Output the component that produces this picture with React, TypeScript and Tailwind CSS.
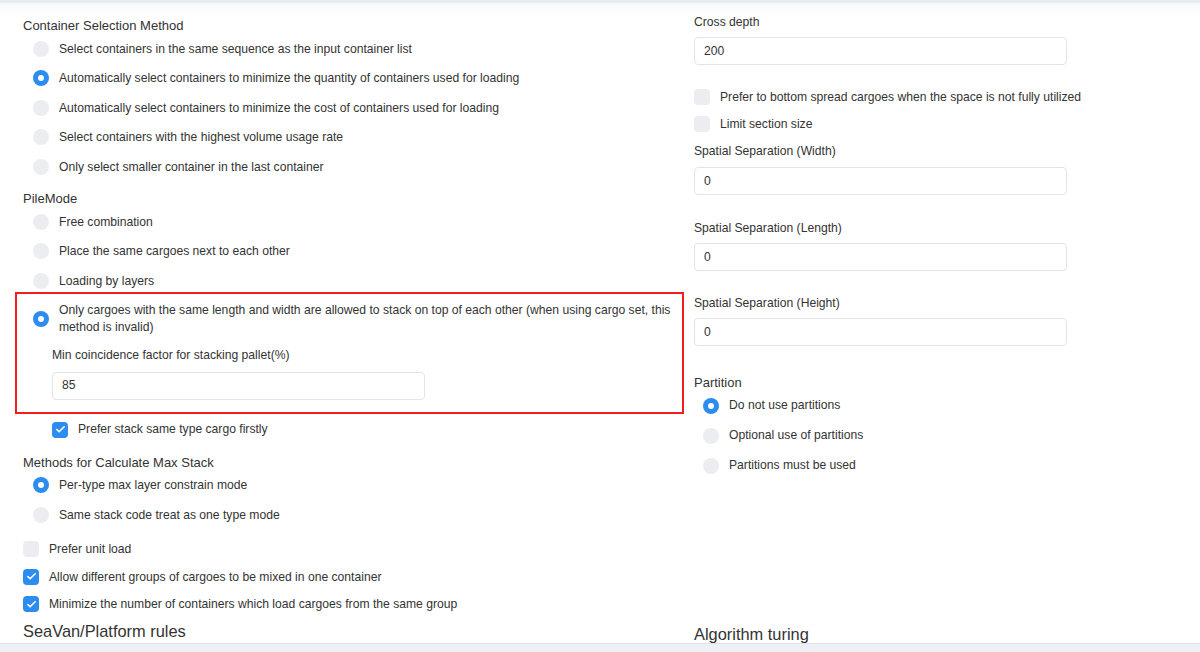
import { Check } from 'lucide-react';

const containerOptions = [
    'Select containers in the same sequence as the input container list',
    'Automatically select containers to minimize the quantity of containers used for loading',
    'Automatically select containers to minimize the cost of containers used for loading',
    'Select containers with the highest volume usage rate',
    'Only select smaller container in the last container',
];

const pileOptions = [
    'Free combination',
    'Place the same cargoes next to each other',
    'Loading by layers',
];

const partitionOptions = [
    'Do not use partitions',
    'Optional use of partitions',
    'Partitions must be used',
];

function Radio({ checked }: { checked?: boolean }) {
    if (checked) {
        return (
            <span className='w-4 h-4 shrink-0 rounded-full bg-[#2d8cf0] flex items-center justify-center'>
                <span className='w-[6px] h-[6px] rounded-full bg-white' />
            </span>
        );
    }
    return <span className='w-4 h-4 shrink-0 rounded-full bg-[#ebedf1]' />;
}

function Checkbox({ checked }: { checked?: boolean }) {
    return (
        <span className={`w-4 h-4 shrink-0 rounded-[4px] flex items-center justify-center
            ${checked ? 'bg-[#2d8cf0]' : 'bg-[#ebedf1]'}`}>
            {checked && <Check className='w-[11px] h-[11px] text-white' strokeWidth={3.5} />}
        </span>
    );
}

function RadioRow({ label, checked, rowClass = 'h-[29.5px]' }: { label: string; checked?: boolean; rowClass?: string }) {
    return (
        <div className={`flex items-center gap-[10px] pl-[10px] ${rowClass}`}>
            <Radio checked={checked} />
            <span>{label}</span>
        </div>
    );
}

function CheckRow({ label, checked, rowClass = 'h-[27.5px]' }: { label: string; checked?: boolean; rowClass?: string }) {
    return (
        <div className={`flex items-center gap-[10px] ${rowClass}`}>
            <Checkbox checked={checked} />
            <span>{label}</span>
        </div>
    );
}

function TextInput({ value, width = 'w-[373px]' }: { value: string; width?: string }) {
    return (
        <div className={`${width} h-[28px] border border-[#e2e4e9] rounded-[4px] flex items-center pl-[9px] bg-white`}>
            {value}
        </div>
    );
}

export default function App() {
    return (
        <div className="w-[1200px] h-[652px] flex flex-col bg-white text-[#333] text-[12.15px] overflow-hidden
            font-['Liberation_Sans',Arial,sans-serif]">
            <div className='h-[3px] bg-[#e8ebf0] shrink-0' />

            <div className='h-[640px] flex bg-[linear-gradient(#f8f9fb,#fff_12px)]'>
                {/* left column */}
                <div className='w-[671px] ml-[23px] flex flex-col'>
                    <div className='mt-[15px] h-[16px] leading-[16px] text-[13px]'>Container Selection Method</div>
                    {containerOptions.map((label, i) => (
                        <RadioRow key={label} label={label} checked={i === 1} />
                    ))}

                    <div className='mt-[9.5px] h-[16px] leading-[16px] text-[13px]'>PileMode</div>
                    {pileOptions.map((label) => (
                        <RadioRow key={label} label={label} />
                    ))}

                    <div className='-ml-[8px] -mt-[3.5px] w-[669px] border-2 border-[#f01e1e] pl-[16px] pr-[8px] pt-[8px] pb-[12px]'>
                        <div className='flex items-center gap-[10px] leading-[17px]'>
                            <Radio checked />
                            <span>Only cargoes with the same length and width are allowed to stack on top of each other (when using cargo set, this method is invalid)</span>
                        </div>
                        <div className='ml-[19px] mt-[11px] leading-[17px]'>Min coincidence factor for stacking pallet(%)</div>
                        <div className='ml-[19px] mt-[7.5px]'>
                            <TextInput value='85' />
                        </div>
                    </div>

                    <div className='ml-[29px] mt-[1px]'>
                        <CheckRow label='Prefer stack same type cargo firstly' checked rowClass='h-[30px]' />
                    </div>

                    <div className='mt-[10px] h-[16px] leading-[16px] text-[13px]'>Methods for Calculate Max Stack</div>
                    <RadioRow label='Per-type max layer constrain mode' checked />
                    <RadioRow label='Same stack code treat as one type mode' />

                    <div className='mt-[6px]'>
                        <CheckRow label='Prefer unit load' />
                        <CheckRow label='Allow different groups of cargoes to be mixed in one container' checked />
                        <CheckRow label='Minimize the number of containers which load cargoes from the same group' checked />
                    </div>

                    <div className='mt-[3px] text-[16.4px] leading-[20px]'>SeaVan/Platform rules</div>
                </div>

                {/* right column */}
                <div className='flex-1 flex flex-col'>
                    <div className='mt-[10.5px] leading-[17px]'>Cross depth</div>
                    <div className='mt-[6.5px]'><TextInput value='200' /></div>

                    <div className='mt-[18.5px]'>
                        <CheckRow label='Prefer to bottom spread cargoes when the space is not fully utilized' rowClass='h-[27px]' />
                        <CheckRow label='Limit section size' rowClass='h-[27px]' />
                    </div>

                    <div className='mt-[5.5px] leading-[17px]'>Spatial Separation (Width)</div>
                    <div className='mt-[7px]'><TextInput value='0' /></div>

                    <div className='mt-[24.5px] leading-[17px]'>Spatial Separation (Length)</div>
                    <div className='mt-[6.5px]'><TextInput value='0' /></div>

                    <div className='mt-[23.5px] leading-[17px]'>Spatial Separation (Height)</div>
                    <div className='mt-[6.5px]'><TextInput value='0' /></div>

                    <div className='mt-[28.5px] h-[15px] leading-[15px] text-[13px]'>Partition</div>
                    <div className='-ml-[1px] mt-[1px]'>
                        {partitionOptions.map((label, i) => (
                            <RadioRow key={label} label={label} checked={i === 0} rowClass='h-[30px]' />
                        ))}
                    </div>

                    <div className='mt-auto text-[16.4px] leading-[20px] mb-[-1px]'>Algorithm turing</div>
                </div>
            </div>

            <div className='flex-1 border-t border-[#dfe2e8] bg-[#eef0f5]' />
        </div>
    );
}
